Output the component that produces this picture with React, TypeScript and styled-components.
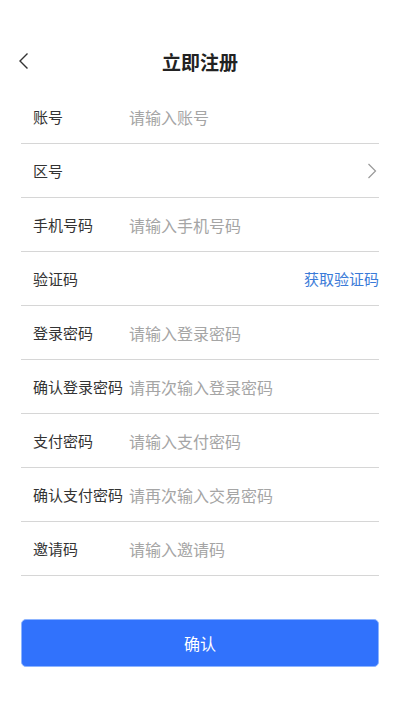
import React from "react";
import styled, { createGlobalStyle } from "styled-components";

const GlobalStyle = createGlobalStyle`
  body {
    margin: 0;
    background: #fff;
    font-family: "Noto Sans CJK SC", "Noto Sans", sans-serif;
  }
`;

const Page = styled.div`
  width: 400px;
  min-height: 711px;
  background: #fff;
`;

const Header = styled.div`
  position: relative;
  height: 54px;
  margin-top: 34px;
  display: flex;
  align-items: center;
  justify-content: center;
`;

const BackButton = styled.button`
  position: absolute;
  left: 14px;
  top: 50%;
  transform: translateY(-50%);
  border: 0;
  background: none;
  padding: 4px;
  display: flex;
`;

const Title = styled.h1`
  margin: 0;
  font-size: 19px;
  font-weight: 700;
  color: #222;
`;

const Form = styled.div`
  padding: 0 21px;
  margin-top: 2px;
`;

const Row = styled.div`
  height: 54px;
  border-bottom: 1px solid #d6d6d6;
  display: flex;
  align-items: center;
  padding-left: 12px;
  box-sizing: border-box;
`;

const Label = styled.span`
  width: 96px;
  flex-shrink: 0;
  font-size: 15px;
  color: #333;
  white-space: nowrap;
`;

const Input = styled.input`
  flex: 1;
  min-width: 0;
  border: 0;
  outline: none;
  padding: 0;
  font-family: inherit;
  font-size: 16px;
  color: #333;
  background: transparent;

  &::placeholder {
    color: #a5a5a5;
  }
`;

const Spacer = styled.div`
  flex: 1;
`;

const CodeLink = styled.span`
  font-size: 15px;
  color: #3b7bd8;
`;

const Arrow = styled.span`
  display: flex;
  padding-right: 2px;
`;

const SubmitButton = styled.button`
  display: block;
  width: 358px;
  height: 48px;
  margin: 43px auto 0;
  border: 1px solid #8db4ff;
  border-radius: 5px;
  background: #3172fc;
  color: #fff;
  font-family: inherit;
  font-size: 16px;
`;

const fields = [
  { label: "账号", placeholder: "请输入账号" },
  { label: "区号", type: "select" },
  { label: "手机号码", placeholder: "请输入手机号码" },
  { label: "验证码", type: "code" },
  { label: "登录密码", placeholder: "请输入登录密码" },
  { label: "确认登录密码", placeholder: "请再次输入登录密码" },
  { label: "支付密码", placeholder: "请输入支付密码" },
  { label: "确认支付密码", placeholder: "请再次输入交易密码" },
  { label: "邀请码", placeholder: "请输入邀请码" },
];

export default function App() {
  return (
    <Page>
      <GlobalStyle />
      <Header>
        <BackButton>
          <svg width="12" height="18" viewBox="0 0 12 18">
            <path d="M9.5 1.5 L2 9 L9.5 16.5" fill="none" stroke="#333" strokeWidth="1.4" />
          </svg>
        </BackButton>
        <Title>立即注册</Title>
      </Header>
      <Form>
        {fields.map((f) => (
          <Row key={f.label}>
            <Label>{f.label}</Label>
            {f.type === "select" ? (
              <>
                <Spacer />
                <Arrow>
                  <svg width="10" height="16" viewBox="0 0 10 16">
                    <path d="M1.5 1 L8.5 8 L1.5 15" fill="none" stroke="#999" strokeWidth="1.2" />
                  </svg>
                </Arrow>
              </>
            ) : f.type === "code" ? (
              <>
                <Spacer />
                <CodeLink>获取验证码</CodeLink>
              </>
            ) : (
              <Input placeholder={f.placeholder} />
            )}
          </Row>
        ))}
      </Form>
      <SubmitButton>确认</SubmitButton>
    </Page>
  );
}
